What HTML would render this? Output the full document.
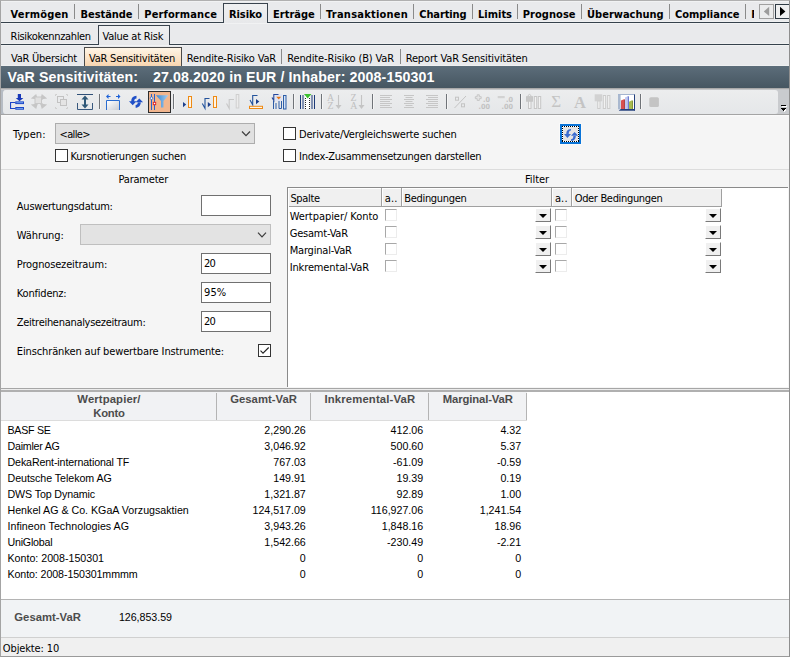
<!DOCTYPE html>
<html lang="de"><head><meta charset="utf-8"><title>VaR Sensitivitäten</title>
<style>
html,body{margin:0;padding:0;background:#fff;}
body{width:790px;height:657px;overflow:hidden;}
#app{position:relative;width:790px;height:657px;overflow:hidden;background:#f5f5f5;font-family:'DejaVu Sans Condensed','Liberation Sans',sans-serif;font-size:11px;}
#app div,#app span.t,#app svg{position:absolute;box-sizing:border-box;}
.t{white-space:pre;line-height:16px;height:16px;font-size:11px;}
.a{font-family:'Liberation Sans',sans-serif;}
.b{font-weight:bold;}
.row{left:1px;width:788px;background:#e9eaec;border-top:1px solid #f1f2f3;border-bottom:1px solid #eff0f1;}
.hl{left:1px;width:788px;height:1px;}
.vsep{width:1px;top:4px;height:15px;background:#8a8a8a;}
.inp{background:#fff;border:1px solid #707070;}
.combo{background:#e1e1e1;border:1px solid #adadad;}
.cb{width:13px;height:13px;background:#fff;border:1px solid #333;}
.cbd{width:12px;height:12px;background:#fff;border:1px solid;border-color:#a8a8a8 #ececec #ececec #a8a8a8;}
.dd{width:16px;height:14px;background:#f0f0f0;border:1px solid;border-color:#fff #7a7a7a #7a7a7a #fff;}
.dd:after{content:'';position:absolute;left:3px;top:5px;border:4px solid transparent;border-top:4px solid #000;border-bottom:none;width:0;height:0;}
.tsep{width:1px;top:94px;height:15px;background:#70757a;}

</style></head>
<body>
<div id="app">
<!-- tab row 1 -->
<div class="row" style="top:1px;height:21px;"></div>
<div class="hl" style="top:22px;background:#36424c;"></div>
<div class="vsep" style="left:74px"></div><div class="vsep" style="left:138px"></div>
<div class="vsep" style="left:320px"></div><div class="vsep" style="left:413px"></div><div class="vsep" style="left:472px"></div>
<div class="vsep" style="left:517px"></div><div class="vsep" style="left:581px"></div><div class="vsep" style="left:669px"></div><div class="vsep" style="left:745px"></div>
<div style="left:223px;top:3px;width:45px;height:20px;background:linear-gradient(#eff0f1,#e7e8ea);border:1px solid #39434d;border-bottom:none;"></div>
<span class="t b" style="left:751.300px;top:7px;width:2.700px;overflow:hidden;">F</span>
<!-- scroll buttons -->
<div style="left:759px;top:4px;width:15px;height:15px;background:#ebeced;border:1px solid #a0a0a0;"></div>
<svg style="left:759px;top:4px" width="15" height="15"><path d="M10.200 2.800L10.200 12L4.800 7.400Z" fill="#9c9c9c"/></svg>
<div style="left:775px;top:4px;width:15px;height:15px;background:#eeeff0;border:1px solid #2f3b45;"></div>
<svg style="left:775px;top:4px" width="15" height="15"><path d="M5 2.800L5 12L10.400 7.400Z" fill="#000"/></svg>
<!-- tab row 2 -->
<div class="row" style="top:23px;height:21px;"></div>
<div class="hl" style="top:44px;background:#36424c;"></div>
<div style="left:98px;top:25px;width:72px;height:20px;background:linear-gradient(#eff0f1,#e7e8ea);border:1px solid #39434d;border-bottom:none;"></div>
<!-- tab row 3 -->
<div class="row" style="top:45px;height:21px;"></div>
<div style="left:84px;top:47px;width:98px;height:19px;background:linear-gradient(#fef5e6,#f8d5b0);border:1px solid #4a4a4a;border-bottom:none;"></div>
<div class="vsep" style="left:281px;top:49px;"></div><div class="vsep" style="left:400px;top:49px;"></div>
<!-- header -->
<div style="left:1px;top:66px;width:788px;height:22px;background:linear-gradient(#5c6d7a,#465661);"></div>
<!-- toolbar -->
<div style="left:1px;top:88px;width:788px;height:27px;background:#c9cbce;"></div>
<div style="left:1px;top:88px;width:788px;height:1px;background:#a9a9a9;"></div>
<div style="left:1px;top:89px;width:788px;height:1px;background:#c4c5c7;"></div>
<div style="left:1px;top:90px;width:3px;height:24px;background:#b6bcc4;"></div>
<div style="left:3px;top:90px;width:775px;height:24px;background:linear-gradient(#ecedee,#e5e7e9);border-radius:3px 3px 3px 3px;"></div>
<div style="left:1px;top:114px;width:788px;height:1px;background:#a4a4a4;"></div>
<div style="left:1px;top:115px;width:788px;height:2px;background:linear-gradient(#fcfcfc,#f5f5f5);"></div>
<svg style="left:780px;top:104px" width="9" height="9" viewBox="780 104 9 9" shape-rendering="crispEdges"><path d="M782 106.500H787" stroke="#fff"/><path d="M782 108.500H787L784.500 112Z" fill="#fff"/><path d="M781 105.500H786" stroke="#000"/><path d="M781 108H786L783.500 111Z" fill="#000"/></svg>
<!--ICONS-START-->
<svg style="left:0;top:88px" width="790" height="27" viewBox="0 88 790 27" font-family="'Liberation Sans',sans-serif">
<!-- separators -->
<g stroke="#6f7378" stroke-width="1">
<path d="M99.5 94V109M173.5 94V109M293.5 94V109M321.5 94V109M372.5 94V109M446.5 94V109M520.5 94V109M640.5 94V109"/>
</g>
<g stroke="#f7f7f7" stroke-width="1" opacity="0.9">
<path d="M100.5 94V109M174.5 94V109M294.5 94V109M322.5 94V109M373.5 94V109M447.5 94V109M521.5 94V109M641.5 94V109"/>
</g>
<!-- 1: tree with down arrow -->
<path d="M17.800 94H21V98H23.400L19.500 101.200L15.800 98H17.800Z" fill="#1838b8"/>
<path d="M10.550 102V109M10 102.500H15.500M10 108.500H15.500" stroke="#1c45c8" stroke-width="1.100" fill="none"/>
<rect x="15.800" y="101.900" width="7.700" height="1.700" fill="#8cc4f4" stroke="#1c45c8" stroke-width="1"/>
<rect x="15.800" y="107.500" width="7.700" height="1.700" fill="#8cc4f4" stroke="#1c45c8" stroke-width="1"/>
<!-- 2: gray expand arrows -->
<g fill="#c6c6c6"><path d="M30.800 98.500L36.200 94L37.800 99.500Z M47.200 98.500L41.800 94L40.200 99.500Z M30.800 104.500L36.200 109L37.800 103.500Z M47.200 104.500L41.800 109L40.200 103.500Z"/>
<path d="M34 97L37 99.500M44 97L41 99.500M34 106L37 103.500M44 106L41 103.500" stroke="#c6c6c6" stroke-width="2"/>
<rect x="35" y="97" width="6.500" height="6.500" fill="#e0e0e0" stroke="#c8c8c8"/></g>
<!-- 3: gray overlapping squares -->
<g fill="none" stroke="#c2c2c2" stroke-width="1"><rect x="57.5" y="96.5" width="6" height="6"/><rect x="60.5" y="99.5" width="6" height="6" fill="#e4e4e4"/>
<path d="M55.5 94.5h1.5M55.5 94.5v1.5M67.5 94.5h-1.5M67.5 94.5v1.5M55.5 108.5h1.5M55.5 108.5v-1.5M67.5 108.5h-1.5M67.5 108.5v-1.5" stroke="#cfcfcf"/></g>
<!-- 4: fit height -->
<path d="M77 94.5H93" stroke="#2f5078" stroke-width="1"/>
<path d="M77.5 103V109.5H92.5V103" stroke="#38587e" stroke-width="1" fill="none"/>
<path d="M85 95.5L88.5 99.5H86V104.5H88.5L85 108.5L81.500 104.5H84V99.5H81.5Z" fill="#2f5878"/>
<!-- 5: fit width -->
<path d="M106 96.5L108.500 94V96H110.500V97H108.500V99Z M120.500 96.5L118 94V96H116V97H118V99Z" fill="#1e62d8"/>
<rect x="107" y="101" width="12" height="9" fill="url(#gw)"/>
<path d="M106.500 110V100.500H119.500V110" fill="none" stroke="#2a6cd0"/>
<defs><linearGradient id="gw" x1="0" y1="0" x2="1" y2="1"><stop offset="0" stop-color="#fff"/><stop offset="1" stop-color="#c8ccd4"/></linearGradient>
<linearGradient id="gf" x1="0" y1="0" x2="1" y2="0"><stop offset="0" stop-color="#3c86d0"/><stop offset="1" stop-color="#a4d0f4"/></linearGradient></defs>
<!-- 6: refresh arrows -->
<path d="M129 101.300H136.500L132.700 105.200Z M131.200 101.500C131.200 98 133.200 96 136.500 95.800V98.500C134.800 98.600 134.200 99.500 134.200 101.500Z" fill="#2050c8"/>
<path d="M135.600 102.300H143.100L139.300 98.500Z M140.800 102C140.800 105.500 138.800 107.600 135.600 107.800V105.100C137.200 105 137.800 104 137.800 102Z" fill="#2050c8"/>
<!-- 7: selected filter -->
<rect x="148.500" y="91.500" width="22" height="21" fill="#f2b68e" stroke="#2d2d2d"/>
<path d="M151.500 94V110M154.500 94V110" stroke="#2a62c8" stroke-width="1"/>
<circle cx="151.500" cy="98.200" r="1.300" fill="#fff" stroke="#2a62c8" stroke-width="0.8"/>
<rect x="153.300" y="102.300" width="2.400" height="2.400" fill="#fff" stroke="#e02020" stroke-width="0.9"/>
<path d="M156 95.300H168.500L163.500 101V107.500H161V101Z" fill="url(#gf)"/>
<!-- 8 -->
<path d="M183 102L186.200 104.600L183 107.200Z" fill="#1c3f8c"/>
<rect x="188.500" y="96.500" width="3" height="11" fill="#fff4e4" stroke="#ee8a14"/>
<!-- 9 -->
<path d="M202.300 103.500L205 108.300V98.500H209.500" fill="none" stroke="#24539c" stroke-width="1.100"/>
<path d="M207.800 102L211 104.600L207.800 107.200Z" fill="#1c3f8c"/>
<rect x="213.500" y="96.500" width="3" height="11" fill="#fff4e4" stroke="#ee8a14"/>
<!-- 10 gray -->
<path d="M226.500 103.500L229.200 108.300V99.500H234" fill="none" stroke="#c8c8c8" stroke-width="1.100"/>
<rect x="236.200" y="94.500" width="2.600" height="13.500" fill="#ececec" stroke="#cfcfcf"/>
<!-- 11 -->
<path d="M250 100L252.700 104.800V95.500H257.500" fill="none" stroke="#24539c" stroke-width="1.100"/>
<path d="M256 99L259.300 101.600L256 104.300Z" fill="#1c3f8c"/>
<rect x="249.500" y="106.300" width="13" height="2.200" fill="#fff4e4" stroke="#ee8a14"/>
<!-- 12 -->
<rect x="275" y="94" width="7" height="7" fill="#dfe4f4"/><path d="M273.500 101V109M276 103V109M279 101V108.500H281.500V101" stroke="#2e5ea8" stroke-width="1" fill="none"/>
<rect x="283.500" y="95.500" width="2.500" height="13.500" fill="#d6e4f6" stroke="#2e5ea8"/>
<path d="M272 97.500L273.800 100.500V94.500H278.500" fill="none" stroke="#24469c" stroke-width="1.100"/>
<path d="M276.300 96.800H281.200L278.700 99.500Z" fill="#e87818"/>
<!-- 13 -->
<path d="M300.500 95V109M303 95V109M312 95V109M314.500 95V109" stroke="#1c3a78" stroke-width="1"/>
<rect x="305" y="95" width="5" height="14" fill="#fff"/>
<path d="M305.500 98V109M309.500 98V109" stroke="#222" stroke-width="1" stroke-dasharray="1 1"/>
<path d="M304 94H311.500L307.700 98.500Z" fill="#3cc030"/>
<!-- 14 AZ -->
<g fill="#c0c0c0" font-size="9.800" font-family="'Liberation Serif',serif"><text x="327" y="100.800">A</text><text x="327.500" y="108.900">Z</text>
<text x="350.600" y="100.800">Z</text><text x="350.200" y="108.900">A</text></g>
<path d="M338.500 95V106M361.500 95V106" stroke="#c4c4c4" stroke-width="1.100"/><path d="M335.500 105H341.500L338.500 109Z M358.500 105H364.500L361.500 109Z" fill="#c4c4c4"/>
<!-- 16-18 align -->
<g stroke="#c6c6c6" stroke-width="1">
<path d="M380 95.500H392M380 97.500H390M380 99.500H392M380 101.500H390M380 103.500H392M380 105.500H390M380 107.500H392"/>
<path d="M404 95.500H414M405.500 97.500H412.500M404 99.500H414M405.500 101.500H412.500M404 103.500H414M405.500 105.500H412.500M404 107.500H414"/>
<path d="M426 95.500H438M428 97.500H438M426 99.500H438M428 101.500H438M426 103.500H438M428 105.500H438M426 107.500H438"/>
</g>
<!-- 19 % -->
<g stroke="#c4c4c4" fill="none" stroke-width="1"><path d="M454.500 108L466 96"/><rect x="455.500" y="97.200" width="3" height="3"/><rect x="461.500" y="103.800" width="3" height="3"/></g>
<!-- 20/21 decimals -->
<g fill="#c2c2c2" font-size="7.200" font-weight="bold" font-family="'DejaVu Sans Condensed','Liberation Sans',sans-serif" text-anchor="end"><text x="490" y="101.800">.0</text><text x="490" y="108.900">.00</text><text x="512.900" y="101.800">.0</text><text x="512.900" y="108.900">.00</text></g>
<path d="M477.200 94.800H479.300V96.700H481.200V98.600H479.300V100.500H477.200V98.600H475.300V96.700H477.200Z" fill="#e6e6e6" stroke="#c4c4c4" stroke-width="0.900"/>
<rect x="497.700" y="96" width="7" height="2.200" fill="#d2d2d2"/>
<!-- 22 lock columns -->
<g stroke="#c6c6c6" fill="#f2f2f2"><rect x="528.500" y="100.500" width="2.500" height="8"/><rect x="534.300" y="96.500" width="2.400" height="12"/><rect x="538.300" y="96.500" width="2.400" height="12"/>
<rect x="526.500" y="96.700" width="6" height="4.500" fill="#c8c8c8"/><path d="M528 96.700V95.500Q529.500 93.300 531 95.500V96.700" fill="none"/></g>
<!-- 23 sigma, 24 A -->
<text x="551.300" y="107" font-size="17" fill="#c4c4c4" font-family="'Liberation Serif',serif">Σ</text>
<text x="574" y="107.600" font-size="16.500" font-weight="bold" fill="#c4c4c4" font-family="'Liberation Serif',serif">A</text>
<!-- 25 gray columns -->
<g stroke="#cccccc" fill="#f2f2f2"><rect x="594.700" y="94.300" width="7.500" height="7" fill="#d2d2d2" stroke="none"/><rect x="597.700" y="101" width="2.300" height="7.500"/><rect x="603.300" y="95.500" width="2.300" height="13"/><rect x="607.600" y="95.500" width="2.300" height="13"/></g>
<!-- 26 chart -->
<rect x="618" y="94" width="17" height="16.500" fill="#fff"/>
<rect x="618" y="94" width="2.600" height="15.500" fill="#a9b8cf"/>
<path d="M618 94.500H635" stroke="#a4b4cf" stroke-width="1"/>
<path d="M634.500 94.500V110.500" stroke="#24407c" stroke-width="1"/>
<path d="M618.500 110.800H635V108.900H620.800Z" fill="#24407c"/>
<path d="M621 100.600L624 99.200V109H621Z" fill="#d85050"/><path d="M624 99.200L624.900 99.600V109H624Z" fill="#a83030"/>
<path d="M625 97.600L627.800 96.200V109H625Z" fill="#c0c8f0"/><path d="M627.800 96L628.800 96.600V109H627.800Z" fill="#4a5cc8"/>
<path d="M629 101.800L632 100.300V109H629Z" fill="#a8bc50"/><path d="M632 100.300L632.900 100.700V109H632Z" fill="#788828"/>
<!-- 27 gray square -->
<rect x="649.300" y="97.300" width="9.600" height="9.600" rx="1.500" fill="#c4c4c4" filter="url(#bl)"/><defs><filter id="bl" x="-20%" y="-20%" width="140%" height="140%"><feGaussianBlur stdDeviation="0.600"/></filter></defs>
</svg>
<!--ICONS-END-->
<!-- form -->
<div class="combo" style="left:55px;top:123px;width:200px;height:21px;"></div>
<svg style="left:241px;top:130px" width="10" height="7"><path d="M1 1.500L5 5.700L9 1.500" fill="none" stroke="#3c3c3c" stroke-width="1.200"/></svg>
<div class="cb" style="left:55px;top:149px;"></div>
<div class="cb" style="left:283px;top:127px;"></div>
<div class="cb" style="left:283px;top:149px;"></div>
<!-- refresh button -->
<div style="left:559px;top:123px;width:23px;height:22px;background:#f9f9f9;"></div>
<div style="left:560px;top:124px;width:21px;height:20px;background:#e4e4e4;border:2px solid #0a74d8;"></div>
<svg style="left:560px;top:124px" width="21" height="20" viewBox="560 124 21 20"><g shape-rendering="crispEdges"><path d="M562 126.500H579M562 141.500H579M562.500 126V142M578.500 126V142" stroke="#fff" fill="none"/><path d="M562 126.500H579M562 141.500H579M562.500 126V142M578.500 126V142" stroke="#000" stroke-dasharray="1 1" fill="none"/></g>
<path d="M564 134.100H571L567.400 138Z M566.300 134.300C566.300 131 567.500 129.200 571 129V130.600C569.300 130.800 568.700 132 568.700 134.300Z" fill="#3a6cd0"/>
<path d="M571 135.700H578.200L574.600 131.900Z M575.800 135.500C575.800 138.800 574.600 140.700 571 140.900V139.300C572.800 139.100 573.400 137.800 573.400 135.500Z" fill="#3a6cd0"/></svg>
<div style="left:1px;top:169px;width:788px;height:1px;background:#dcdcdc;"></div>
<div class="inp" style="left:201px;top:195px;width:70px;height:21px;"></div>
<div class="combo" style="left:80px;top:224px;width:191px;height:21px;border-color:#bfbfbf;background:#e3e3e3;"></div>
<svg style="left:257px;top:231px" width="10" height="7"><path d="M1 1.700L5 5.900L9 1.700" fill="none" stroke="#3c3c3c" stroke-width="1.200"/></svg>
<div class="inp" style="left:201px;top:253px;width:70px;height:21px;"></div>
<div class="inp" style="left:201px;top:282px;width:70px;height:21px;"></div>
<div class="inp" style="left:201px;top:311px;width:70px;height:21px;"></div>
<div class="cb" style="left:258px;top:344px;"></div>
<svg style="left:258px;top:344px" width="13" height="13"><path d="M2.5 6.7 L5 9.2 L10.7 3.5" fill="none" stroke="#222" stroke-width="1.1"/></svg>
<!-- filter grid -->
<div style="left:287px;top:187px;width:501px;height:200px;background:#fff;border-left:1px solid #8a8a8a;border-top:1px solid #8a8a8a;"></div>
<div style="left:289px;top:189px;width:433px;height:18px;background:#f0f0f0;border-bottom:1px solid #a0a0a0;border-right:1px solid #a0a0a0;"></div>
<div style="left:381px;top:188px;width:2px;height:18px;background:#fff;border-left:1px solid #a0a0a0;"></div>
<div style="left:401px;top:188px;width:2px;height:18px;background:#fff;border-left:1px solid #a0a0a0;"></div>
<div style="left:551px;top:188px;width:2px;height:18px;background:#fff;border-left:1px solid #a0a0a0;"></div>
<div style="left:571px;top:188px;width:2px;height:18px;background:#fff;border-left:1px solid #a0a0a0;"></div>
<div class="cbd" style="left:385px;top:209px;"></div><div class="dd" style="left:535px;top:208px;"></div><div class="cbd" style="left:555px;top:209px;"></div><div class="dd" style="left:705px;top:208px;"></div>
<div class="cbd" style="left:385px;top:226px;"></div><div class="dd" style="left:535px;top:225px;"></div><div class="cbd" style="left:555px;top:226px;"></div><div class="dd" style="left:705px;top:225px;"></div>
<div class="cbd" style="left:385px;top:243px;"></div><div class="dd" style="left:535px;top:242px;"></div><div class="cbd" style="left:555px;top:243px;"></div><div class="dd" style="left:705px;top:242px;"></div>
<div class="cbd" style="left:385px;top:260px;"></div><div class="dd" style="left:535px;top:259px;"></div><div class="cbd" style="left:555px;top:260px;"></div><div class="dd" style="left:705px;top:259px;"></div>
<!-- table -->
<div style="left:1px;top:388px;width:788px;height:1px;background:#a6a6a6;"></div>
<div style="left:1px;top:389px;width:788px;height:1px;background:#ececec;"></div>
<div style="left:1px;top:390px;width:788px;height:2px;background:#b0b0b0;"></div>
<div style="left:1px;top:392px;width:788px;height:207px;background:#fff;"></div>
<div style="left:1px;top:392px;width:526px;height:29px;background:#f1f2f4;border-bottom:1px solid #dcdcdc;"></div>
<div style="left:216px;top:393px;width:1px;height:27px;background:#b4b4b4;"></div>
<div style="left:310px;top:393px;width:1px;height:27px;background:#b4b4b4;"></div>
<div style="left:428px;top:393px;width:1px;height:27px;background:#b4b4b4;"></div>
<div style="left:526px;top:393px;width:1px;height:27px;background:#b4b4b4;"></div>
<!-- footer -->
<div style="left:1px;top:599px;width:788px;height:1px;background:#b4b4b4;"></div>
<div style="left:1px;top:600px;width:788px;height:37px;background:#f1f3f5;"></div>
<div style="left:1px;top:637px;width:788px;height:1px;background:#d0d0d0;"></div>
<div style="left:1px;top:638px;width:788px;height:18px;background:#f0f0f0;"></div>

<span class="t b" style="left:10.60px;top:7.00px;letter-spacing:0.172px;">Vermögen</span>
<span class="t b" style="left:80.50px;top:7.00px;letter-spacing:-0.063px;">Bestände</span>
<span class="t b" style="left:144.30px;top:7.00px;letter-spacing:0.113px;">Performance</span>
<span class="t b" style="left:229.00px;top:7.00px;letter-spacing:-0.082px;">Risiko</span>
<span class="t b" style="left:273.00px;top:7.00px;">Erträge</span>
<span class="t b" style="left:326.10px;top:7.00px;letter-spacing:0.221px;">Transaktionen</span>
<span class="t b" style="left:419.30px;top:7.00px;letter-spacing:-0.128px;">Charting</span>
<span class="t b" style="left:478.00px;top:7.00px;letter-spacing:-0.005px;">Limits</span>
<span class="t b" style="left:522.80px;top:7.00px;letter-spacing:0.039px;">Prognose</span>
<span class="t b" style="left:587.10px;top:7.00px;letter-spacing:-0.011px;">Überwachung</span>
<span class="t b" style="left:674.90px;top:7.00px;letter-spacing:0.015px;">Compliance</span>
<span class="t" style="left:10.60px;top:29.00px;letter-spacing:-0.334px;">Risikokennzahlen</span>
<span class="t" style="left:102.50px;top:29.00px;letter-spacing:-0.234px;">Value at Risk</span>
<span class="t" style="left:11.00px;top:51.00px;letter-spacing:-0.245px;">VaR Übersicht</span>
<span class="t" style="left:89.00px;top:51.00px;letter-spacing:-0.220px;">VaR Sensitivitäten</span>
<span class="t" style="left:186.80px;top:51.00px;letter-spacing:-0.169px;">Rendite-Risiko VaR</span>
<span class="t" style="left:287.30px;top:51.00px;letter-spacing:-0.146px;">Rendite-Risiko (B) VaR</span>
<span class="t" style="left:405.70px;top:51.00px;letter-spacing:-0.155px;">Report VaR Sensitivitäten</span>
<span class="t" style="left:13.00px;top:127.00px;letter-spacing:0.071px;">Typen:</span>
<span class="t" style="left:59.50px;top:127.00px;letter-spacing:-0.625px;">&lt;alle&gt;</span>
<span class="t" style="left:70.60px;top:149.00px;letter-spacing:-0.228px;">Kursnotierungen suchen</span>
<span class="t" style="left:299.00px;top:127.00px;letter-spacing:-0.182px;">Derivate/Vergleichswerte suchen</span>
<span class="t" style="left:299.00px;top:149.00px;letter-spacing:-0.249px;">Index-Zusammensetzungen darstellen</span>
<span class="t" style="left:118.60px;top:172.00px;letter-spacing:-0.226px;">Parameter</span>
<span class="t" style="left:525.00px;top:172.00px;letter-spacing:-0.073px;">Filter</span>
<span class="t" style="left:16.80px;top:199.00px;letter-spacing:-0.229px;">Auswertungsdatum:</span>
<span class="t" style="left:16.80px;top:228.00px;letter-spacing:-0.095px;">Währung:</span>
<span class="t" style="left:16.80px;top:257.00px;letter-spacing:-0.148px;">Prognosezeitraum:</span>
<span class="t" style="left:16.80px;top:286.00px;letter-spacing:-0.199px;">Konfidenz:</span>
<span class="t" style="left:16.80px;top:315.00px;letter-spacing:-0.295px;">Zeitreihenanalysezeitraum:</span>
<span class="t" style="left:16.80px;top:344.00px;letter-spacing:-0.124px;">Einschränken auf bewertbare Instrumente:</span>
<span class="t" style="left:204.00px;top:256.00px;letter-spacing:-0.797px;">20</span>
<span class="t" style="left:204.00px;top:285.00px;letter-spacing:0.133px;">95%</span>
<span class="t" style="left:204.00px;top:314.00px;letter-spacing:-0.797px;">20</span>
<span class="t" style="left:290.40px;top:191.00px;letter-spacing:-0.330px;">Spalte</span>
<span class="t" style="left:384.70px;top:191.00px;letter-spacing:0.214px;">a..</span>
<span class="t" style="left:404.30px;top:191.00px;letter-spacing:-0.330px;">Bedingungen</span>
<span class="t" style="left:554.90px;top:191.00px;letter-spacing:0.147px;">a..</span>
<span class="t" style="left:574.70px;top:191.00px;letter-spacing:-0.330px;">Oder Bedingungen</span>
<span class="t" style="left:289.70px;top:209.00px;letter-spacing:-0.047px;">Wertpapier/ Konto</span>
<span class="t" style="left:289.70px;top:226.00px;letter-spacing:-0.208px;">Gesamt-VaR</span>
<span class="t" style="left:289.70px;top:243.00px;letter-spacing:-0.191px;">Marginal-VaR</span>
<span class="t" style="left:289.70px;top:260.00px;letter-spacing:-0.135px;">Inkremental-VaR</span>
<span class="t a b" style="left:77.30px;top:391.00px;font-size:11.3px;color:#4c4c4c;letter-spacing:0.122px;">Wertpapier/</span>
<span class="t a b" style="left:93.20px;top:405.00px;font-size:11.3px;color:#4c4c4c;letter-spacing:-0.205px;">Konto</span>
<span class="t a b" style="left:230.20px;top:391.00px;font-size:11.3px;color:#4c4c4c;letter-spacing:0.024px;">Gesamt-VaR</span>
<span class="t a b" style="left:324.40px;top:391.00px;font-size:11.3px;color:#4c4c4c;letter-spacing:0.158px;">Inkremental-VaR</span>
<span class="t a b" style="left:442.70px;top:391.00px;font-size:11.3px;color:#4c4c4c;letter-spacing:-0.123px;">Marginal-VaR</span>
<span class="t a" style="left:7.50px;top:422.00px;font-size:10.67px;letter-spacing:-0.274px;">BASF SE</span>
<span class="t a" style="left:264.32px;top:422.00px;font-size:10.67px;">2,290.26</span>
<span class="t a" style="left:390.61px;top:422.00px;font-size:10.67px;">412.06</span>
<span class="t a" style="left:500.45px;top:422.00px;font-size:10.67px;">4.32</span>
<span class="t a" style="left:7.50px;top:438.00px;font-size:10.67px;letter-spacing:-0.238px;">Daimler AG</span>
<span class="t a" style="left:264.32px;top:438.00px;font-size:10.67px;">3,046.92</span>
<span class="t a" style="left:390.61px;top:438.00px;font-size:10.67px;">500.60</span>
<span class="t a" style="left:500.45px;top:438.00px;font-size:10.67px;">5.37</span>
<span class="t a" style="left:7.50px;top:454.00px;font-size:10.67px;letter-spacing:-0.123px;">DekaRent-international TF</span>
<span class="t a" style="left:273.21px;top:454.00px;font-size:10.67px;">767.03</span>
<span class="t a" style="left:392.98px;top:454.00px;font-size:10.67px;">-61.09</span>
<span class="t a" style="left:496.90px;top:454.00px;font-size:10.67px;">-0.59</span>
<span class="t a" style="left:7.50px;top:470.00px;font-size:10.67px;letter-spacing:-0.054px;">Deutsche Telekom AG</span>
<span class="t a" style="left:273.21px;top:470.00px;font-size:10.67px;">149.91</span>
<span class="t a" style="left:396.53px;top:470.00px;font-size:10.67px;">19.39</span>
<span class="t a" style="left:500.45px;top:470.00px;font-size:10.67px;">0.19</span>
<span class="t a" style="left:7.50px;top:486.00px;font-size:10.67px;letter-spacing:-0.115px;">DWS Top Dynamic</span>
<span class="t a" style="left:264.32px;top:486.00px;font-size:10.67px;">1,321.87</span>
<span class="t a" style="left:396.53px;top:486.00px;font-size:10.67px;">92.89</span>
<span class="t a" style="left:500.45px;top:486.00px;font-size:10.67px;">1.00</span>
<span class="t a" style="left:7.50px;top:502.00px;font-size:10.67px;">Henkel AG &amp; Co. KGaA Vorzugsaktien</span>
<span class="t a" style="left:252.46px;top:502.00px;font-size:10.67px;">124,517.09</span>
<span class="t a" style="left:370.65px;top:502.00px;font-size:10.67px;">116,927.06</span>
<span class="t a" style="left:479.72px;top:502.00px;font-size:10.67px;">1,241.54</span>
<span class="t a" style="left:7.50px;top:518.00px;font-size:10.67px;letter-spacing:0.039px;">Infineon Technologies AG</span>
<span class="t a" style="left:264.32px;top:518.00px;font-size:10.67px;">3,943.26</span>
<span class="t a" style="left:381.72px;top:518.00px;font-size:10.67px;">1,848.16</span>
<span class="t a" style="left:494.53px;top:518.00px;font-size:10.67px;">18.96</span>
<span class="t a" style="left:7.50px;top:534.00px;font-size:10.67px;letter-spacing:-0.211px;">UniGlobal</span>
<span class="t a" style="left:264.32px;top:534.00px;font-size:10.67px;">1,542.66</span>
<span class="t a" style="left:387.04px;top:534.00px;font-size:10.67px;">-230.49</span>
<span class="t a" style="left:496.90px;top:534.00px;font-size:10.67px;">-2.21</span>
<span class="t a" style="left:7.50px;top:550.00px;font-size:10.67px;letter-spacing:-0.005px;">Konto: 2008-150301</span>
<span class="t a" style="left:299.86px;top:550.00px;font-size:10.67px;">0</span>
<span class="t a" style="left:417.26px;top:550.00px;font-size:10.67px;">0</span>
<span class="t a" style="left:515.26px;top:550.00px;font-size:10.67px;">0</span>
<span class="t a" style="left:7.50px;top:566.00px;font-size:10.67px;letter-spacing:-0.095px;">Konto: 2008-150301mmmm</span>
<span class="t a" style="left:299.86px;top:566.00px;font-size:10.67px;">0</span>
<span class="t a" style="left:417.26px;top:566.00px;font-size:10.67px;">0</span>
<span class="t a" style="left:515.26px;top:566.00px;font-size:10.67px;">0</span>
<span class="t a b" style="left:14.30px;top:609.00px;font-size:11.3px;color:#4c4c4c;letter-spacing:0.014px;">Gesamt-VaR</span>
<span class="t a" style="left:118.90px;top:609.00px;font-size:10.67px;letter-spacing:-0.024px;">126,853.59</span>
<span class="t" style="left:2.80px;top:641.00px;letter-spacing:-0.117px;">Objekte: 10</span>
<span class="t a b" style="left:7.60px;top:68.60px;font-size:14.2px;color:#fff;"><span style="letter-spacing:0.151px">VaR Sensitivitäten:</span><span style="letter-spacing:0.957px">   </span><span style="letter-spacing:0.119px">27.08.2020 in EUR / Inhaber: 2008-150301</span></span>
<!-- window frame -->
<div style="left:0;top:0;width:790px;height:657px;border:1px solid;border-color:#b0b0b0 #8e8e8e #9a9a9a #a4a4a4;pointer-events:none;"></div>
</div>
</body></html>
